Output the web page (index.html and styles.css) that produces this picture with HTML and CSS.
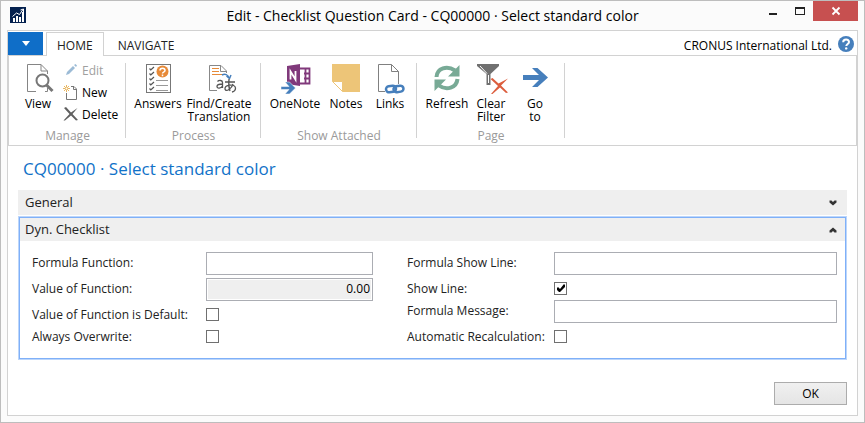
FILE: index.html
```html
<!DOCTYPE html>
<html lang="en">
<head>
<meta charset="utf-8">
<title>Edit - Checklist Question Card</title>
<link rel="stylesheet" href="styles.css">
</head>
<body>
<div class="window">
  <header class="titlebar">
    <svg class="app-icon" width="16" height="16" viewBox="0 0 16 16" aria-hidden="true">
      <rect width="16" height="16" fill="#04214f"/>
      <path d="M3 11h2v4H3zM6 9h2v6H6zM9 10h2v5H9zM12 5h2v10h-2z" fill="#fff"/>
      <path d="M2.500 9.500L6.500 6l3 1.500L13 2.500M10.500 3l3-1v3" fill="none" stroke="#fff"/>
    </svg>
    <h1 class="window-title">Edit - Checklist Question Card - CQ00000 · Select standard color</h1>
    <div class="window-buttons">
      <button class="win-btn" aria-label="Minimize"><svg width="10" height="10"><path d="M1 7h8v2H1z" fill="#222"/></svg></button>
      <button class="win-btn" aria-label="Maximize"><svg width="10" height="10"><path d="M0 1h10v8H0zM1 3v5h8V3z" fill="#222" fill-rule="evenodd"/></svg></button>
      <button class="win-btn win-close" aria-label="Close"><svg width="10" height="10"><path d="M1.500 1.500l7 7M8.500 1.500l-7 7" stroke="#fff" stroke-width="1.800"/></svg></button>
    </div>
  </header>

  <main class="frame">
    <nav class="tabs">
      <button class="app-menu" aria-label="Application menu"><svg width="8" height="5"><path d="M0 0h8L4 5z" fill="#fff"/></svg></button>
      <a class="tab tab-active" href="#home">HOME</a>
      <a class="tab" href="#navigate">NAVIGATE</a>
      <span class="company">CRONUS International Ltd.</span>
      <button class="help" aria-label="Help">
        <svg width="16" height="16" viewBox="0 0 16 16"><circle cx="8" cy="8" r="8" fill="#467fbc"/><path d="M5.200 6.200C5.200 2.600 11 2.700 11 6c0 1.900-2.700 2-2.700 4" fill="none" stroke="#fff" stroke-width="2"/><circle cx="8.200" cy="12.400" r="1.200" fill="#fff"/></svg>
      </button>
    </nav>

    <div class="ribbon" id="home">
      <section class="group group-manage">
        <div class="tools">
          <button class="tool tool-sm">
            <svg width="30" height="30" viewBox="0 0 30 30"><path d="M13 27.500H4.500V.500H18L24.500 7v3M18 .500V7h6.500M24.500 24v3.500H22" fill="none" stroke="#858585"/><circle cx="19.500" cy="16.500" r="6" fill="#fff" stroke="#777" stroke-width="2"/><path d="M23.500 21l6 6" stroke="#777" stroke-width="3"/></svg>
            <span>View</span>
          </button>
          <div class="stack">
            <button class="line" disabled>
              <svg width="16" height="16" viewBox="0 0 16 16"><path d="M3 13l1-3 6-6 2 2-6 6z" fill="#9cbbd6"/><path d="M11 3l1.500-1 1.500 1.500-1 1.500z" fill="#9cbbd6"/></svg>Edit
            </button>
            <button class="line">
              <svg width="16" height="16" viewBox="0 0 16 16"><path d="M3.500 9v6.500h10V5L11 2.500H8M10.500 2.500v3h3" fill="none" stroke="#777"/><path d="M3.500 1v7M0 4.500h7M1 2l5 5M6 2L1 7" stroke="#e8b660"/><circle cx="3.500" cy="4.500" r="1" fill="#fff"/></svg>New
            </button>
            <button class="line">
              <svg width="16" height="16" viewBox="0 0 16 16"><path d="M1 2l2-1 5 5.500L14.500 2 9.500 8l5.500 6-2 .500L8 9.500 2 14.500H.500L6.500 8z" fill="#606060"/></svg>Delete
            </button>
          </div>
        </div>
        <h2 class="group-name">Manage</h2>
      </section>

      <section class="group group-process">
        <div class="tools">
          <button class="tool tool-md">
            <svg width="30" height="30" viewBox="0 0 30 30"><rect x="3.500" y=".500" width="24" height="28" fill="#fff" stroke="#777"/><circle cx="19.500" cy="7.500" r="6" fill="#e78a38"/><path d="M17 6.500c0-3 5-3 5 0 0 1.800-2.500 1.600-2.500 3M19.500 10.500v1.800" fill="none" stroke="#fff" stroke-width="1.500"/><path d="M6.500 4.500l1.300 1.500L11 3M6.500 9.500l1.300 1.500L11 8M6.500 14.500l1.300 1.500L11 13M6.500 19.500l1.300 1.500L11 18M6.500 24.500l1.300 1.500L11 23" fill="none" stroke="#555" stroke-width="1.200"/><path d="M13 16.500h12M13 21.500h12M13 26.500h12" stroke="#999"/></svg>
            <span>Answers</span>
          </button>
          <button class="tool tool-lg">
            <svg width="30" height="30" viewBox="0 0 30 30"><path d="M13 26.500H5.500v-25H17L22.500 7v2M16.500 1.500v6h6" fill="none" stroke="#888"/><path d="M8 4.500h7M8 7.500h7M8 10.500h11" stroke="#e78a38"/><path d="M18 11c3-1.500 6-.500 7 3M22.500 12l3 2.500 1.500-3.500" fill="none" stroke="#467fbc" stroke-width="1.500"/><path d="M13.500 17.500c1.500-1.500 5-1.500 5 1v5.500M18.500 20c-3 0-5.500.500-5.500 2.500 0 2.500 4 2 5.500-.500" fill="none" stroke="#555" stroke-width="1.300"/><path d="M21 18h10M25 15c-.500 4-.500 8 1 12M29 20c-1 4-7 9-8 5-.500-4 10-6 10.500-1 0 2-1.500 3.500-3.500 4" fill="none" stroke="#555" stroke-width="1.300"/></svg>
            <span>Find/Create<br>Translation</span>
          </button>
        </div>
        <h2 class="group-name">Process</h2>
      </section>

      <section class="group group-attached">
        <div class="tools">
          <button class="tool tool-onenote">
            <svg width="30" height="30" viewBox="0 0 30 30"><path d="M7 2L20 0v22L7 20z" fill="#80397b"/><path d="M20 4.500h9.500v15H20M24 9.500h5M24 14.500h5M25.500 4v15" fill="none" stroke="#80397b" stroke-width="1.800"/><path d="M10.500 15.500V7.500l5 8V7" fill="none" stroke="#fff" stroke-width="1.800"/><path d="M1 22.500h8l-4-4.500h4.500l6 6-6 6H5l4-4.500H1z" fill="#467fbc" stroke="#fff" stroke-width=".500"/></svg>
            <span>OneNote</span>
          </button>
          <button class="tool tool-md">
            <svg width="30" height="30" viewBox="0 0 30 30"><path d="M1 0h28v28H12L1 17z" fill="#edc578"/><path d="M1.500 17.500h10v10z" fill="#fff" stroke="#edc578"/></svg>
            <span>Notes</span>
          </button>
          <button class="tool tool-sm">
            <svg width="30" height="30" viewBox="0 0 30 30"><path d="M10 27.500H3.500V.500h13l7 7V20M16.500.500v7h7" fill="none" stroke="#808080"/><g fill="none" stroke="#467fbc" stroke-width="2.500"><rect x="11" y="22" width="10" height="6" rx="3" transform="rotate(-8 16 25)"/><rect x="18.500" y="22" width="10" height="6" rx="3" transform="rotate(-8 23 25)"/></g></svg>
            <span>Links</span>
          </button>
        </div>
        <h2 class="group-name">Show Attached</h2>
      </section>

      <section class="group group-page">
        <div class="tools">
          <button class="tool tool-md">
            <svg width="30" height="30" viewBox="0 0 30 30"><path d="M4.500 13C5 4 15 1 23 6.500M25.500 15c-1 9-11 12-18.500 6.500" fill="none" stroke="#78aa96" stroke-width="4"/><path d="M27.500 1v11.500H16zM2.500 27V15.500H14z" fill="#78aa96"/></svg>
            <span>Refresh</span>
          </button>
          <button class="tool tool-sm">
            <svg width="32" height="30" viewBox="0 0 32 30"><path d="M2 0h22v2l-8.500 8v11h-4V10L2 2z" fill="#707070"/><path d="M13.500 11v8M5 2l7 7.500" stroke="#fff"/><path d="M15.500 15l2-1 6 5.500 9.500-5-7 7 7 7-2 .500-6-5.500-7.500 6.500H16l7-8z" fill="#dc5e3e"/></svg>
            <span>Clear<br>Filter</span>
          </button>
          <button class="tool tool-md">
            <svg width="30" height="30" viewBox="0 0 30 30"><path d="M3 11h16l-7-7h5.500L28 13.500 17.500 23H12l7-7H3z" fill="#467fbc"/></svg>
            <span>Go<br>to</span>
          </button>
        </div>
        <h2 class="group-name">Page</h2>
      </section>
    </div>

    <div class="page">
      <h2 class="page-title">CQ00000 · Select standard color</h2>
      <section class="panel">
        <button class="panel-head" aria-expanded="false">General
          <svg width="8" height="6"><path d="M.500.500h2L4 2 5.500.500h2v2L4 5.500.500 2.500z" fill="#333"/></svg>
        </button>
      </section>
      <section class="panel panel-open">
        <button class="panel-head" aria-expanded="true">Dyn. Checklist
          <svg width="8" height="6"><path d="M.500 5.500h2L4 4l1.500 1.500h2v-2L4 .500.500 3.500z" fill="#333"/></svg>
        </button>
        <form class="fields">
          <div class="column column-left">
            <div class="field"><label for="ff">Formula Function:</label><input id="ff" type="text"></div>
            <div class="field"><label for="vf">Value of Function:</label><input id="vf" class="locked" type="text" value="0.00" readonly></div>
            <div class="field field-check"><label for="vd">Value of Function is Default:</label><input id="vd" type="checkbox"></div>
            <div class="field field-check"><label for="ao">Always Overwrite:</label><input id="ao" type="checkbox"></div>
          </div>
          <div class="column column-right">
            <div class="field"><label for="fs">Formula Show Line:</label><input id="fs" type="text"></div>
            <div class="field field-check"><label for="sl">Show Line:</label><input id="sl" type="checkbox" checked></div>
            <div class="field"><label for="fm">Formula Message:</label><input id="fm" type="text"></div>
            <div class="field field-check"><label for="ar">Automatic Recalculation:</label><input id="ar" type="checkbox"></div>
          </div>
        </form>
      </section>
      <footer class="actions"><button class="ok">OK</button></footer>
    </div>
  </main>
</div>
</body>
</html>
```
FILE: styles.css
```css
* { box-sizing: border-box; }

body {
  margin: 0;
  font: 12px/13px "Open Sans", "Noto Sans", sans-serif;
  color: #000;
}

button {
  margin: 0;
  padding: 0;
  border: 0;
  background: none;
  font: inherit;
  color: inherit;
}

svg { display: block; flex: none; overflow: visible; }

h1, h2 { margin: 0; font-weight: 400; }

.window {
  display: flex;
  flex-direction: column;
  min-height: 100vh;
  padding: 0 6px 6px;
  border: 1px solid #bdbdbd;
  background: #fbfbfb;
}

.titlebar {
  display: grid;
  grid-template-columns: 116px 1fr 116px;
  height: 29px;
}

.app-icon { margin: 6px 0 0 3px; }

.window-title {
  font-size: 14px;
  line-height: 29px;
  text-align: center;
  white-space: nowrap;
}

.window-buttons {
  display: flex;
  justify-content: flex-end;
}

.win-btn {
  display: flex;
  align-items: center;
  justify-content: center;
  width: 27px;
  height: 20px;
}

.win-close {
  width: 45px;
  background: #c75050;
}

.frame {
  display: flex;
  flex: 1;
  flex-direction: column;
  border: 1px solid #d2d2d2;
  background: #fff;
}

.tabs {
  display: flex;
  align-items: stretch;
  height: 25px;
  padding-top: 1px;
  border-bottom: 1px solid #d2d2d2;
}

.app-menu {
  display: flex;
  align-items: center;
  justify-content: center;
  width: 35px;
  margin-right: 3px;
  background: #0f6ec8;
}

.tab {
  padding: 0 14px;
  line-height: 27px;
  color: #222;
  text-decoration: none;
}

.tab-active {
  margin-bottom: -1px;
  padding: 0 10px;
  border: 1px solid #d2d2d2;
  border-bottom: 0;
  background: #fff;
  line-height: 25px;
}

.company {
  margin-left: auto;
  line-height: 27px;
}

.help { margin: 0 3px 0 6px; }

.ribbon {
  display: flex;
  height: 90px;
  padding: 7px 0 3px;
  border: 1px solid #d2d2d2;
  border-top: 0;
}

.group {
  display: flex;
  flex-direction: column;
  justify-content: space-between;
  padding: 1px 4px 0;
  background: linear-gradient(#d2d2d2, #d2d2d2) right top / 1px 75px no-repeat;
}

.group-manage { width: 117px; }
.group-process { width: 135px; }
.group-attached { width: 156px; }
.group-page { width: 148px; }

.tools {
  display: flex;
  justify-content: center;
}

.group-manage .tools {
  justify-content: flex-start;
  padding-left: 5px;
}

.group-process .tools { gap: 3px; }

.tool {
  display: flex;
  flex: none;
  flex-direction: column;
  align-items: center;
  justify-content: flex-start;
  gap: 3px;
  white-space: nowrap;
}

.tool-sm { width: 40px; }
.tool-md { width: 48px; }
.tool-onenote { width: 54px; }
.tool-lg { width: 68px; }

.stack {
  display: flex;
  flex-direction: column;
  margin-top: -5px;
  padding-left: 5px;
}

.line {
  display: flex;
  align-items: center;
  gap: 3px;
  height: 22px;
}

.line:disabled { color: #a0a0a0; }

.group-name {
  color: #9a9a9a;
  font-size: 12px;
  line-height: 13px;
  text-align: center;
}

.page {
  display: flex;
  flex: 1;
  flex-direction: column;
  padding: 10px;
}

.page-title {
  padding-left: 5px;
  margin-bottom: 9px;
  color: #1172c8;
  font-size: 17px;
  line-height: 25px;
}

.panel-head {
  display: flex;
  align-items: center;
  justify-content: space-between;
  width: 100%;
  height: 25px;
  padding: 0 10px 0 7px;
  background: #efefef;
  color: #222;
  font-size: 13px;
}

.panel-open {
  margin: 2px 1px 1px;
  border: 1px solid #7fb0f8;
  box-shadow: 0 0 0 1px #bcd6fb;
}

.panel-open .panel-head {
  height: 23px;
  padding: 0 8px 0 5px;
}

.fields {
  display: grid;
  grid-template-columns: 341fr 430fr;
  gap: 34px;
  padding: 11px 8px 10px 12px;
  color: #222;
}

.field {
  display: grid;
  grid-template-columns: 174px 1fr;
  align-items: center;
  height: 23px;
  margin-bottom: 3px;
  white-space: nowrap;
}

.column-right .field { grid-template-columns: 147px 1fr; }

.field label { padding-bottom: 2px; }

.field-check { height: 22px; margin: 0; }

.field input[type="text"] {
  width: 100%;
  height: 23px;
  margin: 0;
  padding: 0 2px 2px;
  border: 1px solid #abadb3;
  border-radius: 0;
  background: #fff;
  font: inherit;
}

.field input.locked[type="text"] {
  background: #efefef;
  box-shadow: inset 0 0 0 1px #fff;
  text-align: right;
}

.field input[type="checkbox"] {
  appearance: none;
  width: 13px;
  height: 13px;
  margin: 0 0 1px;
  border: 1px solid #707070;
  background: #fff;
}

.field input[type="checkbox"]:checked::before {
  content: "";
  display: block;
  width: 11px;
  height: 11px;
  background: #000;
  clip-path: polygon(2px 5px, 3px 4px, 5px 6px, 9px 1px, 10px 2px, 10px 4px, 5px 9px, 4px 9px, 2px 7px);
}

.actions {
  display: flex;
  justify-content: flex-end;
  margin-top: auto;
}

.ok {
  width: 73px;
  height: 23px;
  border: 1px solid #acacac;
  background: linear-gradient(#f0f0f0, #e5e5e5);
}
```
